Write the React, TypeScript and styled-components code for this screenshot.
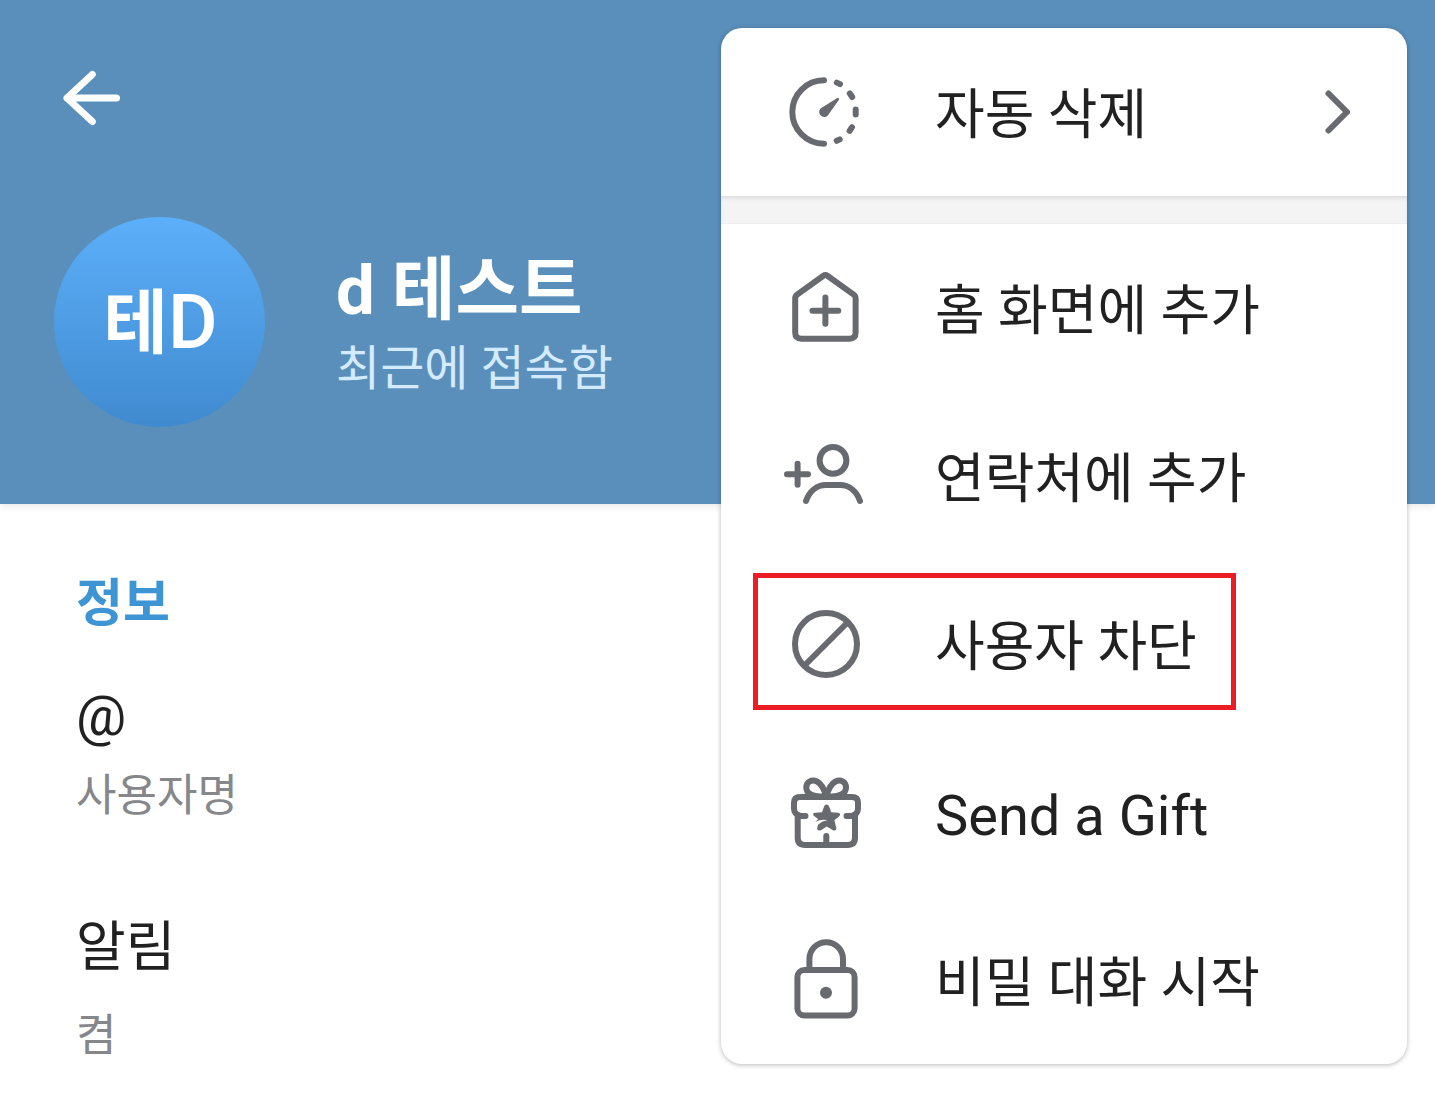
import React from 'react';
import styled, { createGlobalStyle } from 'styled-components';

const GlobalStyle = createGlobalStyle`
  *, *::before, *::after { box-sizing: border-box; }
  body {
    margin: 0;
    background: #fff;
    color: #212121;
    font-family: Roboto, 'Noto Sans CJK KR', sans-serif;
  }
  h1, h2, p, dl, dt, dd { margin: 0; }
  button {
    border: 0;
    padding: 0;
    background: none;
    color: inherit;
    font: inherit;
    text-align: left;
    cursor: pointer;
  }
`;

const Page = styled.div`
  position: relative;
  min-height: 100vh;
  overflow: hidden;
`;

const Header = styled.header`
  background: #5a8fbb;
  padding-bottom: 77px;
  box-shadow: 0 2px 8px rgba(0, 0, 0, 0.1);
`;

const Toolbar = styled.div`
  display: flex;
  align-items: center;
  height: 196px;
  padding: 0 49px;
`;

const IconButton = styled.button`
  display: flex;
  color: #fff;
`;

const Icon = styled.svg<{ $stroke?: number }>`
  flex: none;
  width: 84px;
  height: 84px;
  fill: none;
  stroke: currentColor;
  stroke-width: ${({ $stroke = 6 }) => $stroke};
  stroke-linecap: round;
  stroke-linejoin: round;
`;

const Profile = styled.div`
  display: flex;
  align-items: center;
  gap: 71px;
  padding: 21px 54px 0;
`;

const Avatar = styled.div`
  display: flex;
  align-items: baseline;
  justify-content: center;
  width: 211px;
  height: 210px;
  padding: 63px 0 0 2px;
  border-radius: 50%;
  background: linear-gradient(#5caffa, #408acf);
  color: #fff;
  font-size: 76px;
  font-weight: 500;
  line-height: 84px;
`;

const Strong = styled.span`
  font-size: 70px;
  font-weight: 700;
`;

const ProfileText = styled.div`
  padding-top: 10px;
`;

const Name = styled.h1`
  color: #fff;
  font-size: 69px;
  font-weight: 700;
  line-height: 84px;
`;

const Status = styled.p`
  color: #d3eaff;
  font-size: 48px;
  line-height: 72px;
`;

const Info = styled.main`
  padding: 64px 76px;
`;

const SectionTitle = styled.h2`
  color: #3d95d4;
  font-size: 51px;
  font-weight: 700;
  line-height: 72px;
`;

const Entries = styled.dl`
  display: flex;
  flex-direction: column;
  gap: 80px;
  padding-top: 40px;
`;

const Entry = styled.div<{ $spacious?: boolean }>`
  display: flex;
  flex-direction: column-reverse;
  gap: ${({ $spacious }) => ($spacious ? 16 : 8)}px;
`;

const EntryValue = styled.dd<{ $latin?: boolean }>`
  font-size: ${({ $latin }) => ($latin ? 56 : 54)}px;
  line-height: 72px;
`;

const EntryLabel = styled.dt`
  color: #85878b;
  font-size: 44px;
  line-height: 72px;
`;

const Menu = styled.div`
  position: absolute;
  top: 28px;
  right: 28px;
  width: 686px;
  border-radius: 21px;
  background: #fff;
  box-shadow: 0 1px 5px rgba(0, 0, 0, 0.28);
  overflow: hidden;
`;

const MenuItem = styled.button`
  position: relative;
  display: flex;
  align-items: center;
  gap: 67px;
  width: 100%;
  height: 168px;
  padding: 0 28px 0 63px;
  color: #676a6f;
`;

const MenuLabel = styled.span<{ $latin?: boolean }>`
  flex: 1;
  padding-top: 8px;
  color: #212121;
  font-size: ${({ $latin }) => ($latin ? 56 : 54)}px;
  line-height: 72px;
`;

const Divider = styled.div`
  height: 28px;
  background: #f4f4f4;
  box-shadow: inset 0 3px 4px -1px rgba(0, 0, 0, 0.1), inset 0 -1px 0 #ececec;
`;

const Highlight = styled.span`
  position: absolute;
  top: 13px;
  left: 32px;
  width: 483px;
  height: 137px;
  border: 5px solid #ec1c24;
  pointer-events: none;
`;

const ArrowLeft = () => (
  <Icon viewBox="0 0 84 84" $stroke={7} aria-hidden="true">
    <path d="M43.3 18.5L18 42l25.3 23.5M18 42H67.5" />
    <path d="M18 42l8-5v10z" fill="currentColor" stroke="none" />
  </Icon>
);

const TimerIcon = () => (
  <Icon viewBox="0 0 84 84" aria-hidden="true">
    <path d="M40 10.3A31.7 31.7 0 0 0 40 73.7" />
    <path d="M52.8 12.6l3.2 1.5M65.8 23.4l2.4 3.6M71.7 39.6v4.8M68 57.2l-2.4 3.6M55.7 69.4l-3 1.4" />
    <path
      d="M53.2 28L36.6 38.4A5 5 0 1 0 43.8 45.4L55 29.8Q55.2 27 53.2 28Z"
      fill="currentColor"
      stroke="none"
    />
  </Icon>
);

const HomeAddIcon = () => (
  <Icon viewBox="0 0 84 84" aria-hidden="true">
    <path d="M39.4 9.7Q41.4 8.3 43.4 9.7L69.7 28.6Q71.6 30 71.6 32.4V66.5Q71.6 72.7 65.4 72.7H17.4Q11.2 72.7 11.2 66.5V32.4Q11.2 30 13.1 28.6Z" />
    <path d="M28.5 44.7H54.3M41.4 31.6V57.8" />
  </Icon>
);

const PersonAddIcon = () => (
  <Icon viewBox="0 0 84 84" aria-hidden="true">
    <circle cx="49" cy="26.4" r="13.4" />
    <path d="M3 40.2H24M13.6 29.7V50.7M22 67C25.5 57 33 51 42 51H56C65 51 72.5 57 76 67" />
  </Icon>
);

const BlockIcon = () => (
  <Icon viewBox="0 0 84 84" aria-hidden="true">
    <circle cx="42" cy="42" r="31" />
    <path d="M21.5 62.5L62.5 21.5" />
  </Icon>
);

const GiftIcon = () => (
  <Icon viewBox="0 0 84 84" aria-hidden="true">
    <path d="M21.5 46H17Q10 44.5 10 38.5V33Q10 27 16 27H68Q74 27 74 33V38.5Q74 44.5 67 46H62.5" />
    <path d="M13.7 45V67.5Q13.7 75 21.2 75H63.5Q71 75 71 67.5V45M42.3 66V75" />
    <path d="M40 26.5C31 26.5 22.3 24.5 22.3 17.5C22.3 11.5 28 9 33 11.5C38.5 14.5 40.5 20 42.2 26.5C44 20 46 14.5 51.5 11.5C56.5 9 62 11.5 62 17.5C62 24.5 53 26.5 44 26.5" />
    <path
      d="M42.5 34.5Q44.6 34.5 45.2 36.7L47.2 42.3L54 42.8Q57.6 43.8 55 46.4L50.4 50.3L52.3 58Q52.5 61.5 49 60.3L42.7 56.5L37 60.3Q32.8 61.5 33.2 57.8L34.2 54.5Q38.5 50.7 43.5 50.2Q36.5 49 31.5 52L34.2 49L29.7 45.7Q27.8 43.3 31.4 42.8L38 42.3L40 36.7Q40.6 34.5 42.5 34.5Z"
      fill="currentColor"
      stroke="none"
    />
  </Icon>
);

const LockIcon = () => (
  <Icon viewBox="0 0 84 84" aria-hidden="true">
    <rect x="13.4" y="32" width="57.2" height="45.5" rx="7" />
    <path d="M25.4 32V21A16.8 16.8 0 0 1 59 21V32" />
    <circle cx="42" cy="54.7" r="6" fill="currentColor" stroke="none" />
  </Icon>
);

const ChevronRight = () => (
  <Icon viewBox="0 0 84 84" aria-hidden="true">
    <path d="M33.5 23.5L52 42L33.5 60.5" />
  </Icon>
);

const actions = [
  { label: '홈 화면에 추가', icon: <HomeAddIcon /> },
  { label: '연락처에 추가', icon: <PersonAddIcon /> },
  { label: '사용자 차단', icon: <BlockIcon />, highlighted: true },
  { label: 'Send a Gift', icon: <GiftIcon />, latin: true },
  { label: '비밀 대화 시작', icon: <LockIcon /> },
];

const entries = [
  { value: '@', label: '사용자명', latin: true },
  { value: '알림', label: '켬', spacious: true },
];

export default function App() {
  return (
    <Page lang="ko">
      <GlobalStyle />
      <Header>
        <Toolbar>
          <IconButton type="button" aria-label="뒤로">
            <ArrowLeft />
          </IconButton>
        </Toolbar>
        <Profile>
          <Avatar>
            <Strong>테</Strong>D
          </Avatar>
          <ProfileText>
            <Name>d 테스트</Name>
            <Status>최근에 접속함</Status>
          </ProfileText>
        </Profile>
      </Header>
      <Info>
        <SectionTitle>정보</SectionTitle>
        <Entries>
          {entries.map((entry) => (
            <Entry key={entry.label} $spacious={entry.spacious}>
              <EntryLabel>{entry.label}</EntryLabel>
              <EntryValue $latin={entry.latin}>{entry.value}</EntryValue>
            </Entry>
          ))}
        </Entries>
      </Info>
      <Menu role="menu">
        <MenuItem type="button" role="menuitem">
          <TimerIcon />
          <MenuLabel>자동 삭제</MenuLabel>
          <ChevronRight />
        </MenuItem>
        <Divider role="separator" />
        {actions.map((action) => (
          <MenuItem key={action.label} type="button" role="menuitem">
            {action.icon}
            <MenuLabel $latin={action.latin}>{action.label}</MenuLabel>
            {action.highlighted && <Highlight />}
          </MenuItem>
        ))}
      </Menu>
    </Page>
  );
}
